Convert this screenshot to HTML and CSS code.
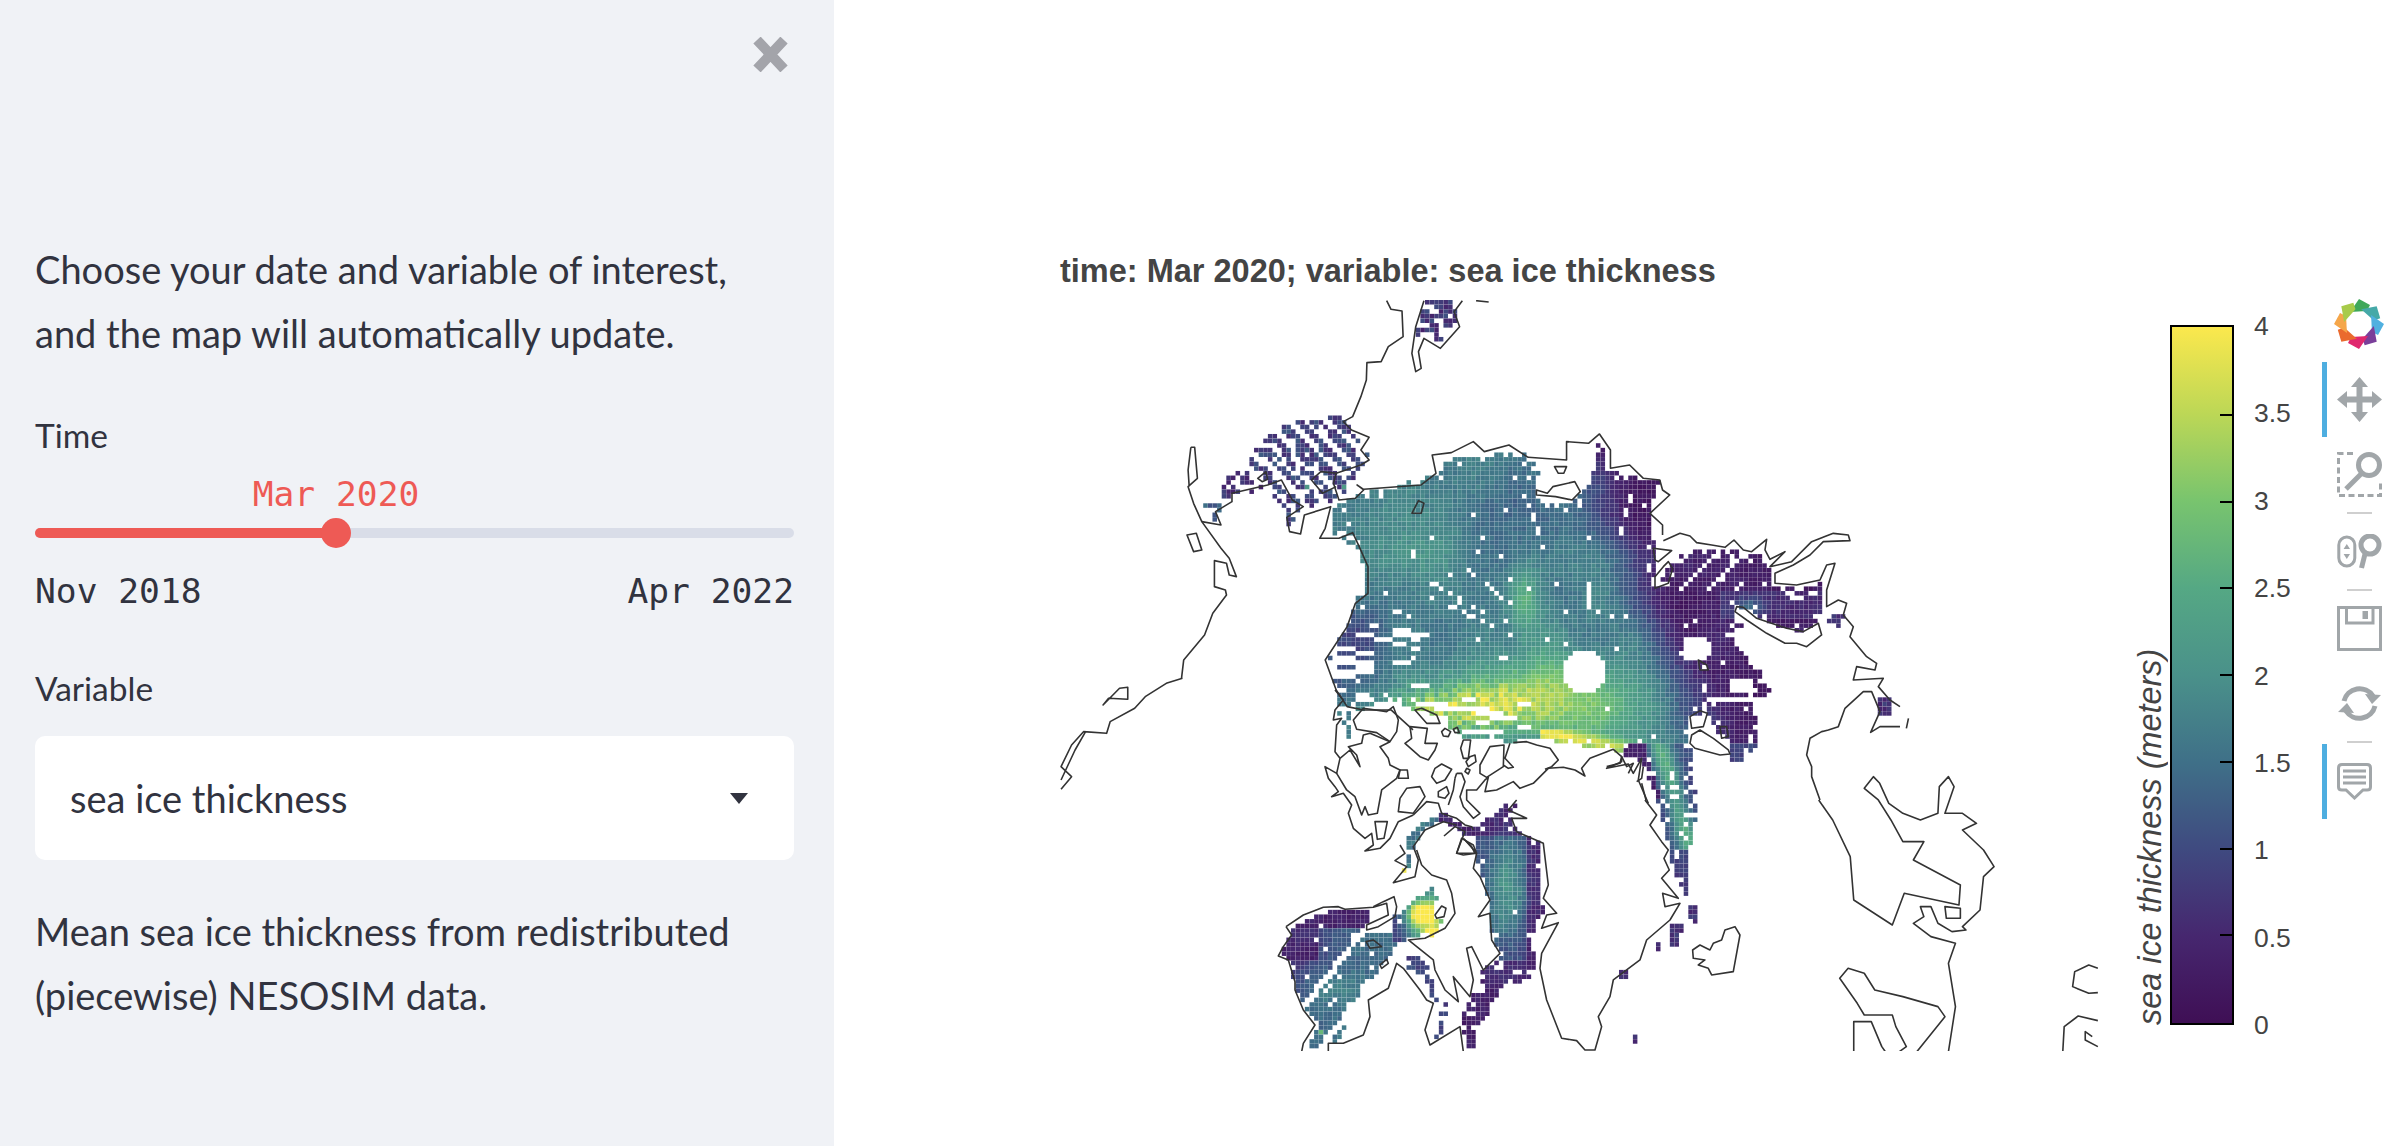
FILE: index.html
```html
<!DOCTYPE html>
<html lang="en">
<head>
<meta charset="utf-8">
<title>Sea ice thickness</title>
<link rel="stylesheet" href="styles.css">
</head>
<body>
<div class="app">
  <aside class="sidebar">
    <button class="close" aria-label="Close">
      <svg width="37" height="35" viewBox="0 0 37 35"><path class="close-x" d="M5 3 L32 32 M32 3 L5 32"/></svg>
    </button>
    <p class="para intro">Choose your date and variable of interest,<br>and the map will automatically update.</p>
    <div class="label time-label">Time</div>
    <div class="slider">
      <div class="slider-value" style="left:301px">Mar 2020</div>
      <div class="track"><div class="fill" style="width:301px"></div><div class="thumb" style="left:301px"></div></div>
      <div class="slider-range"><span>Nov 2018</span><span>Apr 2022</span></div>
    </div>
    <div class="label var-label">Variable</div>
    <div class="select"><span>sea ice thickness</span><svg width="18" height="11" viewBox="0 0 18 11"><path class="caret" d="M0 0H18L9 11Z"/></svg></div>
    <p class="para note">Mean sea ice thickness from redistributed<br>(piecewise) NESOSIM data.</p>
  </aside>
  <main class="main">
    <div class="figure">
      <div class="fig-title">time: Mar 2020; variable: sea ice thickness</div>
      <div class="map">
        <canvas id="heat" class="heat" width="1040" height="751"></canvas>
        <svg class="coast" viewBox="1060 300 1040 751" width="1040" height="751">
          <g transform="translate(1040 230) scale(.5485 .3333)">
            <path d="M632,212 L640,238 L660,243 L662,320 L635,350 L622,395 L596,398 L595,450 L585,500 L570,560 L553,575 L568,600 L600,622 L585,660 L600,690 L585,705 L540,730 L535,760 L545,810 L575,805 L590,780 L578,765 L590,778 L695,765 L722,730 L715,675 L750,668 L790,635 L810,665 L855,645 L890,682 L960,690 L960,635 L1000,640 L1020,612 L1040,660 L1040,715 L1075,705 L1100,745 L1130,750 L1135,780 L1148,795 L1112,850 L1135,885 L1135,915"/>
            <path d="M275,652 L282,652 L287,745 L270,770 L280,820 L295,875 L330,955 L345,985 L358,1040 L345,1035 L340,1000 L318,992 L318,1070 L338,1080 L340,1095 L315,1150 L300,1215 L262,1290 L258,1345 M275,652 L270,720 L272,770"/>
            <path d="M295,875 L330,885 L320,845 L350,815 L350,790 L415,765 L440,750 L460,810 L480,830 L450,862 L455,905 L475,912 L482,855 L530,830 L520,895 L510,925 L545,925 L570,908 L582,950 L598,1010 L598,1090 L575,1120 L560,1190 L520,1290 L540,1380 L560,1430 L590,1440 L640,1440 L660,1470 L680,1500"/>
            <path d="M397,745 L412,725 L415,748 L405,755 Z M540,730 L512,725 L495,750 L515,790 L540,770"/>
            <path d="M700,212 L685,290 L678,370 L685,425 L695,415 L690,365 L700,325 L730,355 L765,290 L755,245 L770,212 M795,212 L818,216"/>
            <path d="M268,915 L285,910 L295,960 L280,965 Z M115,1425 L145,1375 L160,1372 L160,1408 L125,1405 Z M678,850 L690,812 L700,820 L695,850Z M938,710 L960,710 L955,730 L945,730 Z M905,780 L925,790 L935,770 L975,755 L985,785 L970,810 L940,800 L905,795 Z"/>
          </g>
          <g transform="translate(1600 500) scale(.3333)">
            <path d="M190,122 L240,100 L270,108 L290,128 L335,135 L375,142 L402,120 L430,150 L455,155 L500,118 L495,150 L510,178 L555,155 L510,200 L575,185 L635,125 L700,100 L745,105 L750,122 L670,125 L630,165 L580,195 L525,220 L525,250 L590,255 L660,240 L680,195 L705,190 L680,270 L680,320 L715,300 L740,310 L730,345 L760,380 L750,410 L800,470 L830,490 L825,510 L770,500 L760,540 L850,535 L835,560 L870,600 L900,620"/>
            <path d="M900,680 L840,680 L812,697 L840,635 L815,575 L790,575 L735,625 L715,680 L685,690 L665,695 L630,715 L620,765 L635,800 L635,830 L660,900"/>
            <path d="M410,320 L430,322 L470,355 L530,375 L560,385 L610,395 L655,370 L665,405 L620,440 L590,430 L555,430 L500,400 L440,360 L405,335 Z"/>
            <path d="M160,145 L215,152 L175,185 L165,180 Z M205,185 L218,205 L205,250 L165,265 L165,230 L190,200 Z M295,480 L320,495 L325,510 L300,510 Z"/>
            <path d="M270,650 L300,632 L322,640 L310,680 L275,685 Z M275,705 L300,690 L340,715 L385,750 L390,762 L360,765 L285,745 L270,730Z M360,680 L380,680 L385,710 L365,715 Z"/>
            <path d="M20,800 L60,790 L65,770 L80,800 L100,790 L85,820 M110,845 L125,835 L130,800 M125,850 L138,900"/>
          </g>
          <g transform="translate(1040 650) scale(.7015 .3333)">
            <path d="M203,85 L180,100 L150,140 L135,175 L100,215 L95,250 L62,245 L45,285 L30,350 L45,380 L30,418 M30,390 L50,300 L65,245"/>
            <path d="M1110,450 L1130,510 L1155,620 L1160,750 L1215,825 L1232,730 L1310,765 L1312,705 L1245,630 L1260,575 L1230,575 L1213,510 L1195,450 L1175,415 L1188,380 L1197,400 L1210,460 L1230,490 L1255,510 L1280,490 L1282,410 L1295,380 L1303,410 L1290,490 L1315,490 L1335,520 L1315,540 L1345,600 L1360,650 L1345,680 L1340,780 L1315,830 L1320,840 L1300,845 L1280,820 L1270,770 L1255,770 L1260,800 L1245,820 L1270,860 L1305,880 L1295,940 L1305,1070 L1295,1205"/>
            <path d="M1250,1205 L1290,1100 L1280,1070 L1230,1040 L1190,1020 L1175,970 L1152,955 L1140,985 L1165,1060 L1175,1095 L1215,1095 L1220,1130 L1235,1190 L1225,1205 M1160,1205 L1160,1115 L1185,1115 L1200,1190 L1205,1205 M1290,770 L1312,775 L1312,805 L1292,805 Z M1238,205 L1235,235"/>
            <path d="M1508,955 L1495,945 L1475,965 L1472,1010 L1495,1030 L1508,1028 M1508,1112 L1480,1098 L1460,1130 L1458,1205 M1508,1190 L1490,1170 L1490,1145 L1500,1160"/>
          </g>
          <g transform="translate(1300 690) scale(.3333)">
            <path d="M160,90 L190,55 L260,65 L280,50 L295,90 L290,125 L270,155 L230,128 L170,118 Z"/>
            <path d="M270,155 L210,130 L190,135 L185,160 L145,170 L170,195 L180,230 L150,180 L120,205 L110,250 L75,230 L85,265 L105,290 L115,305 L95,320 L130,310 L155,345 L145,370 L160,415 L195,445 L215,430 L220,465 L195,483 L240,475 L270,445 L295,395 L340,375"/>
            <path d="M270,155 L240,170 L265,205 L270,225 L300,240 L290,265 L245,300 L232,370 L205,375 L195,350 L185,375 L165,320 L140,300 L110,250"/>
            <path d="M105,0 L130,30 L105,60 L100,90 L125,85 L110,105 L105,185 L120,205"/>
            <path d="M345,60 L365,55 L410,75 L420,100 L380,100 Z M425,125 L435,115 L452,125 L445,140 L430,138 Z M460,118 L472,112 L478,128 L465,128 Z M330,110 L382,115 L375,160 L412,160 L405,180 L385,210 L360,200 L315,160 L335,145 Z M490,150 L512,150 L505,205 L490,205 L482,175 Z M510,200 L525,195 L528,215 L505,230 L498,215Z M500,235 L510,240 L505,252 L495,245Z M540,225 L570,170 L612,165 L610,230 L560,262 L540,250Z M630,160 L615,205 L640,232 L625,235 L610,225 M405,235 L425,222 L455,238 L435,270 L410,280 L395,260Z M415,305 L440,290 L447,310 L435,325 L415,320 Z M225,395 L262,395 L252,445 L232,448 Z M320,295 L360,290 L375,320 L340,370 L295,365 L300,325 Z M300,240 L322,240 L325,265 L295,265 Z"/>
            <path d="M340,375 L380,335 L415,340 L425,370 L470,385 L495,405 L515,410 L520,420"/>
            <path d="M470,250 L485,250 L495,275 L480,320 L490,350 L520,385 L540,370 L500,330 L500,300 L530,300 L555,270 L565,262 L555,305 L590,300 L640,275 L660,295 L700,280 L745,235 L790,232 L825,240 L855,258 L845,235 L870,205 L940,178 L965,200 L965,215 L920,235 L985,222 L1000,250 L1025,205 L1015,270 L1045,340"/>
            <path d="M465,265 L470,250 M465,265 L460,300 L445,345 M640,158 L680,155 L710,165 L750,175 L775,210 L755,230 L735,238"/>
            <path d="M300,465 L315,490 L285,512 L320,530 L280,578 L345,560 L355,510 L340,470 L375,420 L430,395 L470,405 M432,438 L465,410 L495,425 L487,445 L470,490 L525,490 L515,470 L490,445"/>
          </g>
          <g transform="translate(1260 800) scale(.3333)">
            <path d="M485,195 L515,225 L560,240 L575,280 L585,340 L555,385 L495,415 L445,420 L520,480 L525,510 L555,570 L595,605 L580,530 L605,560 L630,590 L640,540 L620,445 L635,440 L670,510 L720,460 L695,420 L690,340 L655,350 L690,300 L660,230 L640,205 L650,160 L615,120 M650,160 L610,165 L590,160 L605,115 L640,135 L650,160 M470,150 L485,195"/>
            <path d="M525,345 L545,318 L558,325 L552,350 L530,355 Z"/>
            <path d="M78,380 L130,345 L190,322 L235,320 L255,328 L340,322 L380,310 L385,345 L320,375 L320,390 L355,380 L405,350 L410,320 L402,290 L370,305 L340,320"/>
            <path d="M78,380 L95,405 L70,440 L55,468 L85,480 L105,545 L105,570 L130,630 L165,675 L130,730 L125,755 M205,755 L205,730 L250,730 L310,705 L330,650 L325,600 L385,565 L410,490 L430,505 L480,570 L500,600 L520,610 L495,690 L510,735 L600,680 L610,755"/>
            <path d="M318,425 L340,420 L365,440 L330,445 Z M360,495 L380,478 L385,490 L365,505Z"/>
            <path d="M770,95 L850,130 L865,255 L850,295 L890,340 L860,345 L845,385 L895,368 L845,460 L840,505 L860,600 L905,715 L950,722 L975,750 L1005,750 L1025,680 L1015,650 L1050,590 L1060,540 L1140,480 L1160,420 L1230,360 L1260,310 L1215,320 L1208,280 L1255,295 L1205,235 L1228,210 L1212,175 L1225,150 L1205,125 L1170,75 L1190,45 L1155,0 M770,95 L755,55 L800,55 L745,30 L770,0"/>
            <path d="M1298,450 L1300,475 L1335,480 L1315,495 L1345,505 L1355,525 L1420,515 L1440,405 L1425,380 L1395,390 L1385,420 L1360,430 L1350,450 L1320,435 Z"/>
          </g>
        </svg>
      </div>
    </div>
    <div class="legend">
      <div class="axis-label">sea ice thickness <em>(meters)</em></div>
      <div class="bar">
        <i class="mark edge"></i><i class="mark"></i><i class="mark"></i><i class="mark"></i><i class="mark"></i><i class="mark"></i><i class="mark"></i><i class="mark"></i><i class="mark edge"></i>
      </div>
      <div class="ticks">
        <span>4</span><span>3.5</span><span>3</span><span>2.5</span><span>2</span><span>1.5</span><span>1</span><span>0.5</span><span>0</span>
      </div>
    </div>
    <div class="toolbar">
      <div class="logo">
        <svg width="50" height="50" viewBox="-25 -25 50 50">
          <path fill="#3fa85a" d="M-9,-12 L0,-25 L11,-19 L8,-13 Z"/>
          <path fill="#45a9a8" transform="rotate(45)" d="M-9,-12 L0,-25 L11,-19 L8,-13 Z"/>
          <path fill="#50b0e0" transform="rotate(90)" d="M-9,-12 L0,-25 L11,-19 L8,-13 Z"/>
          <path fill="#7a3f9a" transform="rotate(135)" d="M-9,-12 L0,-25 L11,-19 L8,-13 Z"/>
          <path fill="#e0286e" transform="rotate(180)" d="M-9,-12 L0,-25 L11,-19 L8,-13 Z"/>
          <path fill="#ea6a2e" transform="rotate(225)" d="M-9,-12 L0,-25 L11,-19 L8,-13 Z"/>
          <path fill="#f5a64a" transform="rotate(270)" d="M-9,-12 L0,-25 L11,-19 L8,-13 Z"/>
          <path fill="#a8cb4a" transform="rotate(315)" d="M-9,-12 L0,-25 L11,-19 L8,-13 Z"/>
        </svg>
      </div>
      <div class="tool active">
        <svg width="45" height="45" viewBox="0 0 45 45"><path class="solid" d="M22.5 0L31 10H25.500V19.500H35V14L45 22.500L35 31V25.500H25.500V35H31L22.500 45L14 35H19.500V25.500H10V31L0 22.500L10 14V19.500H19.500V10H14Z"/></svg>
      </div>
      <div class="tool">
        <svg width="45" height="45" viewBox="0 0 45 45"><path class="dash" d="M16 1.500H1.500V43.500H43.500V30"/><circle class="line thick" cx="32" cy="13" r="10.500"/><path class="line thick" d="M25 21L9 37"/></svg>
      </div>
      <div class="sep"></div>
      <div class="tool">
        <svg width="45" height="35" viewBox="0 0 45 35"><rect class="line" x="1.800" y="3" width="16" height="29" rx="8"/><path class="solid" d="M9.800 10L13 15H6.600ZM9.800 25L6.600 20H13Z"/><circle class="line thick" cx="33" cy="11" r="9"/><path class="line thick" d="M28 20L24.500 34"/></svg>
      </div>
      <div class="sep"></div>
      <div class="tool">
        <svg width="45" height="45" viewBox="0 0 45 45"><path class="line" d="M1.500 1.500H43.500V43.500H1.500Z"/><path class="line" d="M9.500 1.500V17H36V1.500"/><path class="solid" d="M25.500 5H31V13H25.500Z"/></svg>
      </div>
      <div class="tool">
        <svg width="45" height="37" viewBox="0 0 45 37"><path class="line thick" d="M7 16A16 16 0 0 1 36 11M38 21A16 16 0 0 1 9 26"/><path class="solid" d="M44 10L35 19L28 9ZM1 27L10 18L17 28Z"/></svg>
      </div>
      <div class="sep sep-last"></div>
      <div class="tool active">
        <svg width="35" height="37" viewBox="0 0 35 37"><path class="line" d="M5 1.500H30Q33.500 1.500 33.500 5V24Q33.500 27 30 27H26L17.500 35L9 27H5Q1.500 27 1.500 24V5Q1.500 1.500 5 1.500Z"/><path class="line" d="M6 8H29M6 14H29M6 20H29"/></svg>
      </div>
    </div>
  </main>
</div>
<script src="script.js"></script>
</body>
</html>
```

FILE: styles.css
```css
* { box-sizing: border-box; }
html, body { margin: 0; height: 100%; background: #fff; }
.app { display: flex; height: 1146px; overflow: hidden; }

.sidebar {
  width: 834px; flex: none; height: 1146px; background: #f0f2f6; color: #31333f;
  padding: 37px 40px 0 35px; display: flex; flex-direction: column;
  font-family: "Lato", "Liberation Sans", sans-serif;
}
.close { align-self: flex-end; margin-right: 5px; padding: 0; border: 0; background: none; height: 35px; display: block; }
.close-x { stroke: #a3a4aa; stroke-width: 10; fill: none; }
.para { margin: 0; font-size: 38px; line-height: 64px; }
.intro { margin-top: 165px; }
.label { font-size: 33.500px; line-height: 40px; }
.time-label { margin-top: 50px; }
.slider { position: relative; margin-top: 8px; height: 128px; }
.slider-value {
  font: 34.600px/40px "DejaVu Sans Mono", "Liberation Mono", monospace; color: #ee5a55;
  position: absolute; top: 11px; transform: translateX(-50%); white-space: nowrap;
}
.track { position: absolute; top: 65px; left: 0; right: 0; height: 10px; border-radius: 5px; background: #d9dde8; }
.fill { height: 10px; border-radius: 5px; background: #ee5a55; }
.thumb { position: absolute; top: -10px; width: 30px; height: 30px; margin-left: -15px; border-radius: 50%; background: #ee5a55; }
.slider-range {
  position: absolute; top: 108px; left: 0; right: 0; display: flex; justify-content: space-between;
  font: 34.600px/40px "DejaVu Sans Mono", "Liberation Mono", monospace; color: #31333f;
}
.var-label { margin-top: 77px; }
.select {
  margin-top: 28px; height: 124px; background: #fff; border-radius: 10px; padding: 0 46px 0 35px;
  display: flex; align-items: center; justify-content: space-between; font-size: 38px;
}
.caret { fill: #31333f; }
.note { margin-top: 39px; }

.main { flex: 1; display: flex; align-items: flex-start; padding-left: 226px; }
.figure { width: 1040px; flex: none; padding-top: 246px; }
.fig-title { height: 54px; font: bold 32.500px/50px "Liberation Sans", Arial, sans-serif; color: #444; white-space: nowrap; }
.map { position: relative; width: 1040px; height: 751px; overflow: hidden; }
.heat { display: block; filter: blur(.6px); }
.coast { position: absolute; inset: 0; }
.coast path { fill: none; stroke: #333; stroke-width: 1.6px; stroke-linejoin: round; vector-effect: non-scaling-stroke; }

.legend { display: flex; align-items: flex-start; flex: none; margin-top: 325px; height: 700px; font-family: "Liberation Sans", Arial, sans-serif; color: #444; }
.axis-label {
  width: 40px; margin-left: 30px; height: 700px; writing-mode: vertical-rl; transform: rotate(180deg);
  font-size: 32.400px; line-height: 40px; font-style: italic; white-space: nowrap;
}
.axis-label em { font-style: italic; }
.bar {
  width: 64px; height: 700px; border: 2px solid #000; display: flex; flex-direction: column; justify-content: space-between; align-items: flex-end;
  background: linear-gradient(to top, #3f0f55 0%, #46276f 12.500%, #3f4a80 25%, #3f7088 37.500%, #4a918a 50%, #55a884 62.500%, #78c46e 75%, #bcd756 87.500%, #fbe84d 100%);
}
.mark { display: block; width: 12px; height: 2px; background: #000; }
.mark.edge { visibility: hidden; }
.ticks { width: 48px; margin-left: 20px; height: 700px; padding-top: 1px; display: flex; flex-direction: column; justify-content: space-between; font-size: 26.500px; }
.ticks span { height: 0; line-height: 0; white-space: nowrap; }

.toolbar { flex: none; margin-left: 20px; margin-top: 299px; display: flex; flex-direction: column; width: 70px; }
.logo { height: 50px; margin: 0 0 13px 12px; }
.logo svg { display: block; }
.tool { height: 75px; border-left: 5px solid transparent; padding-left: 10px; display: flex; align-items: center; }
.tool.active { border-left-color: #4eaee0; }
.tool svg { display: block; }
.sep { width: 25px; height: 2px; margin-left: 25px; background: #cfcfcf; flex: none; }
.sep-last { margin-bottom: 1px; }
.solid { fill: #a1a6a9; }
.line { fill: none; stroke: #a1a6a9; stroke-width: 3; }
.line.thick { stroke-width: 5; }
.dash { fill: none; stroke: #a1a6a9; stroke-width: 3; stroke-dasharray: 6 3.500; }
```

FILE: script.js
```js
(function () {
  var canvas = document.getElementById('heat');
  var ctx = canvas.getContext('2d');
  var X0 = 1060, Y0 = 300, CELL = 4.62;
  var POLE = [1585, 672];
  var STOPS = [[63,15,85],[70,39,111],[63,74,128],[63,112,136],[74,145,138],[85,168,132],[120,196,110],[188,215,86],[251,232,77]];

  function colour(v) {
    var t = Math.max(0, Math.min(1, v / 4)) * 8, i = Math.min(7, Math.floor(t)), f = t - i;
    var a = STOPS[i], b = STOPS[i + 1];
    return 'rgb(' + Math.round(a[0] + (b[0] - a[0]) * f) + ',' + Math.round(a[1] + (b[1] - a[1]) * f) + ',' + Math.round(a[2] + (b[2] - a[2]) * f) + ')';
  }
  function hash(i, j, k) { var s = Math.sin(i * 127.1 + j * 311.7 + k * 74.7) * 43758.5453; return s - Math.floor(s); }
  function noise(x, y, size, k) {
    var u = x / size, v = y / size, i = Math.floor(u), j = Math.floor(v), a = u - i, b = v - j;
    a = a * a * (3 - 2 * a); b = b * b * (3 - 2 * b);
    return (hash(i, j, k) * (1 - a) + hash(i + 1, j, k) * a) * (1 - b) + (hash(i, j + 1, k) * (1 - a) + hash(i + 1, j + 1, k) * a) * b - 0.5;
  }
  function smooth(a, b, x) { var t = Math.max(0, Math.min(1, (x - a) / (b - a))); return t * t * (3 - 2 * t); }
  function blob(x, y, cx, cy, sx, sy) { var a = (x - cx) / sx, b = (y - cy) / sy; return Math.exp(-(a * a + b * b)); }
  function inside(p, x, y) {
    var c = false;
    for (var i = 0, j = p.length - 1; i < p.length; j = i++) {
      if ((p[i][1] > y) !== (p[j][1] > y) && x < (p[j][0] - p[i][0]) * (y - p[i][1]) / (p[j][1] - p[i][1]) + p[i][0]) c = !c;
    }
    return c;
  }
  function edge(p, x, y) {
    var best = 1e9;
    for (var i = 0, j = p.length - 1; i < p.length; j = i++) {
      var ax = p[j][0], ay = p[j][1], dx = p[i][0] - ax, dy = p[i][1] - ay;
      var t = Math.max(0, Math.min(1, ((x - ax) * dx + (y - ay) * dy) / (dx * dx + dy * dy)));
      var ex = ax + t * dx - x, ey = ay + t * dy - y;
      best = Math.min(best, ex * ex + ey * ey);
    }
    return Math.sqrt(best);
  }

  var main = [[1449,460],[1468,457],[1506,453],[1525,453],[1531,460],[1540,470],[1536,483],[1534,497],[1556,507],[1575,500],[1588,487],[1594,470],[1597,443],[1602,443],[1608,470],[1638,478],[1660,482],[1649,513],[1655,537],[1655,550],[1654,586],[1675,558],[1700,548],[1710,550],[1747,552],[1763,557],[1767,568],[1772,570],[1770,585],[1800,590],[1823,583],[1822,610],[1818,622],[1803,632],[1778,627],[1757,617],[1737,607],[1733,613],[1743,625],[1730,633],[1747,657],[1755,653],[1747,663],[1763,672],[1757,682],[1773,688],[1772,698],[1753,698],[1757,727],[1757,745],[1748,757],[1738,763],[1727,757],[1730,748],[1713,730],[1707,710],[1690,720],[1690,747],[1693,758],[1690,773],[1698,795],[1699,800],[1698,805],[1693,840],[1688,857],[1690,870],[1687,895],[1680,893],[1673,870],[1665,827],[1657,800],[1643,763],[1613,750],[1590,750],[1567,743],[1533,740],[1513,742],[1463,738],[1443,722],[1400,703],[1388,702],[1370,707],[1350,713],[1350,730],[1352,745],[1343,723],[1335,710],[1340,697],[1325,660],[1347,627],[1355,603],[1368,577],[1355,547],[1331,532],[1333,507],[1364,493],[1396,487],[1435,473]];
  var hudson = [[1293,927],[1320,913],[1340,910],[1373,908],[1367,923],[1363,933],[1393,933],[1407,933],[1397,947],[1380,980],[1360,1000],[1340,1040],[1315,1048],[1308,1050],[1310,1040],[1317,1023],[1303,1007],[1295,987],[1290,960],[1280,955],[1285,947]];
  var foxe = [[1393,917],[1412,903],[1433,885],[1437,897],[1433,910],[1443,920],[1433,938],[1423,933],[1408,940],[1403,943],[1393,940]];
  var strait = [[1407,957],[1425,955],[1435,987],[1437,1003],[1432,1000],[1423,977],[1407,967]];
  var strips = [[1432,1040],[1437,1023],[1443,1003],[1457,1000],[1447,1017],[1440,1040]];
  var baffin = [[1502,807],[1517,802],[1510,818],[1517,832],[1540,843],[1543,883],[1540,903],[1547,907],[1538,920],[1535,933],[1527,937],[1537,950],[1538,960],[1530,977],[1517,987],[1513,977],[1500,990],[1493,1007],[1477,1027],[1477,1050],[1463,1050],[1463,1013],[1480,983],[1480,973],[1500,957],[1490,927],[1487,890],[1477,860],[1473,837],[1460,825],[1480,827],[1490,817]];
  var arc = [[1408,837],[1423,822],[1443,813],[1460,823],[1473,830],[1467,837],[1443,822],[1427,827],[1417,843],[1408,865],[1415,867],[1403,872],[1407,857]];
  var barents = [[1255,440],[1293,423],[1340,413],[1372,460],[1337,500],[1300,510],[1290,530],[1285,510],[1250,465]];
  var kola = [[1220,475],[1250,465],[1265,490],[1240,495],[1222,500]];
  var kola2 = [[1205,505],[1220,500],[1225,515],[1215,520]];
  var top = [[1424,302],[1453,302],[1457,320],[1440,345],[1430,330],[1422,340],[1416,352],[1414,342]];
  var spots = [[[1833,612],[1845,614],[1840,628],[1828,622]],[[1880,698],[1892,698],[1892,716],[1878,716]],[[1632,1036],[1638,1036],[1638,1042],[1632,1042]],[[1655,940],[1662,940],[1662,952],[1655,952]],[[1640,960],[1645,960],[1640,968]],[[1620,972],[1626,972],[1626,980],[1620,980]],[[1672,925],[1682,925],[1680,945],[1672,945]],[[1690,905],[1700,905],[1698,925],[1690,920]]];

  function vMain(x, y, i, j) {
    var v = 1.65;
    v -= 1.35 * smooth(-25, 65, x - (1578 + (y - 500) * 0.45));
    v -= 0.6 * blob(x, y, 1350, 640, 40, 60);
    v -= 0.3 * blob(x, y, 1520, 510, 50, 40);
    v += 0.35 * blob(x, y, 1410, 530, 70, 50);
    var hot = 1.65 * blob(x, y, 1465, 708, 72, 24);
    v += hot;
    v += 0.95 * blob(x, y, 1530, 695, 85, 42);
    v += 0.7 * blob(x, y, 1595, 712, 70, 35);
    v += 0.85 * blob(x, y, 1525, 600, 14, 38);
    v += 0.45 * blob(x, y, 1550, 645, 22, 40);
    if (y > 730 && x > 1540 && x < 1660) v += 1.6 * Math.exp(-Math.pow((y - (742 + (x - 1590) * 0.18)) / 8, 2));
    if (y > 745 && x > 1625) {
      var r = 1655 + (y - 770) * 0.3;
      v = 0.9 + 1.5 * Math.exp(-Math.pow((x - r - 12) / 12, 2));
      if (y < 800 && x < r - 2) v = 0.3;
      if (y > 850) v = 0.9;
    }
    if (x > 1720 && y < 620 && y > 590) v = 0.6 + 0.8 * blob(x, y, 1750, 607, 14, 8);
    v += noise(x, y, 40, 1) * 0.4 + (hash(i, j, 2) - 0.5) * (0.26 + hot * 0.65);
    return v;
  }
  function gMain(x, y, i, j) {
    if (blob(x, y, POLE[0], POLE[1], 22, 22) > 0.37) return true;
    var holeX = (x - 1697) / 16, holeY = (y - 649) / 12;
    if (holeX * holeX + holeY * holeY < 1 + (hash(i, j, 3) - 0.5) * 0.4) return true;
    var dx = x - POLE[0], dy = y - POLE[1], rad = Math.sqrt(dx * dx + dy * dy), th = Math.atan2(dy, dx);
    var bin = Math.floor((th + 3.2) / 0.018);
    if (th < -0.9 && th > -3 && rad > 60 && hash(bin, 7, 4) < 0.11) {
      var st = 60 + hash(bin, 8, 4) * 190, len = 20 + hash(bin, 9, 4) * 70;
      if (rad > st && rad < st + len && hash(i, j, 5) < 0.85) return true;
    }
    if (hash(i, j, 6) < 0.007) return true;
    var d = edge(main, x, y);
    if (d < 9 && hash(i, j, 7) < 0.16) return true;
    if (x < 1440 && y > 630 && y < 720) {
      var p = (1440 - x) / 100 * 0.35 + 0.05;
      if (hash(Math.floor(i / 4), j, 8) < p) return true;
    }
    if (x > 1400 && x < 1530 && y > 695 && y < 738 && hash(Math.floor(i / 3), j, 9) < 0.2) return true;
    if (x > 1680 && x < 1745 && y > 550 && y < 590 && Math.sin((x + y) / 4.5) > 0.9) return true;
    if (x > 1790 && y > 585 && y < 602 && Math.sin((x * 0.3 + y) / 2.2) > 0.75) return true;
    if (x > 1700 && y > 665 && y < 705 && hash(Math.floor(i / 5), j, 10) < 0.14) return true;
    if (x > 1660 && x < 1760 && y > 735 && hash(i, j, 11) < 0.06) return true;
    return false;
  }
  function band(x, y) { return 0.78 * x + 0.62 * y; }

  var regions = [
    { p: foxe, v: function (x, y, i, j) { return 0.9 + 3.3 * Math.max(blob(x, y, 1425, 915, 17, 14), blob(x, y, 1433, 932, 12, 8)) + 0.9 * smooth(1400, 1415, x) + (hash(i, j, 2) - 0.5) * 0.3; }, g: function (x, y, i, j) { return hash(i, j, 6) < 0.05; } },
    { p: hudson, v: function (x, y, i, j) {
        var u = band(x, y), v = u < 1641 ? 0.65 + smooth(1590, 1640, u) * 0.7 : 1.55;
        if (x < 1320 && y < 960) v = 0.5;
        if (y < 930) v = 0.35;
        if (u > 1655 && y > 1000 && hash(i, j, 13) < 0.04) v = 3;
        return v + noise(x, y, 30, 1) * 0.4 + (hash(i, j, 2) - 0.5) * 0.3;
      }, g: function (x, y, i, j) {
        var u = band(x, y);
        if (Math.abs(u - 1641) < 3 && y > 930) return true;
        if (Math.abs(u - 1680) < 3.5) return true;
        if (Math.abs(((u + 3) % 13)) < 1 && hash(i, j, 5) < 0.3) return true;
        return hash(i, j, 6) < 0.025;
      } },
    { p: strait, v: function (x, y, i, j) { return 0.7 + hash(i, j, 2) * 0.5; }, g: function (x, y, i, j) { return hash(i, j, 6) < 0.15; } },
    { p: strips, v: function (x, y, i, j) { return 0.4 + hash(i, j, 2) * 0.8; }, g: function (x, y, i, j) { return hash(i, j, 6) < 0.5; } },
    { p: baffin, v: function (x, y, i, j) {
        var v = 0.9 + 1.2 * blob(x, y, 1505, 885, 20, 55);
        if (x > 1528 || y < 835 || y > 960) v -= 0.55;
        return v + noise(x, y, 25, 1) * 0.4 + (hash(i, j, 2) - 0.5) * 0.3;
      }, g: function (x, y, i, j) {
        if (y > 960 && hash(Math.floor(i / 2), j, 5) < 0.14) return true;
        return edge(baffin, x, y) < 6 ? hash(i, j, 6) < 0.14 : hash(i, j, 6) < 0.012;
      } },
    { p: arc, v: function (x, y, i, j) { if (y > 866) return 3.9; return (x > 1440 ? 0.5 : 1.6) + (hash(i, j, 2) - 0.5) * 0.5; }, g: function (x, y, i, j) { return hash(i, j, 6) < 0.1; } },
    { p: barents, v: function (x, y, i, j) { return 0.55 + hash(i, j, 2) * 0.7 + (hash(i, j, 14) < 0.03 ? 1.5 : 0); }, g: function (x, y, i, j) { return Math.sin((x - y) * 0.3 + noise(x, y, 22, 15) * 5) > 0.35 || hash(i, j, 6) < 0.12; } },
    { p: kola, v: function (x, y, i, j) { return 0.35 + hash(i, j, 2) * 0.6; }, g: function (x, y, i, j) { return hash(i, j, 6) < 0.5; } },
    { p: kola2, v: function (x, y, i, j) { return 1 + hash(i, j, 2) * 0.7; }, g: function (x, y, i, j) { return hash(i, j, 6) < 0.35; } },
    { p: top, v: function (x, y, i, j) { return 0.4 + hash(i, j, 2) * 0.7; }, g: function (x, y, i, j) { return hash(i, j, 6) < 0.3; } },
    { p: main, v: vMain, g: gMain }
  ];
  spots.forEach(function (s) {
    regions.push({ p: s, v: function (x, y, i, j) { return 0.4 + hash(i, j, 2) * 0.5; }, g: function () { return false; } });
  });

  for (var j = 0; j < 163; j++) {
    for (var i = 0; i < 226; i++) {
      var x = X0 + (i + 0.5) * CELL, y = Y0 + (j + 0.5) * CELL;
      for (var r = 0; r < regions.length; r++) {
        if (inside(regions[r].p, x, y)) {
          if (!regions[r].g(x, y, i, j)) {
            ctx.fillStyle = colour(regions[r].v(x, y, i, j));
            ctx.fillRect(i * CELL, j * CELL, CELL - 0.1, CELL - 0.1);
          }
          break;
        }
      }
    }
  }
})();
```
